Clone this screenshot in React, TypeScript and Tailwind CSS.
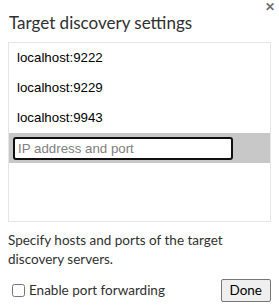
import { useState } from 'react';

const hosts = ['localhost:9222', 'localhost:9229', 'localhost:9943'];

export default function App() {
  const [value, setValue] = useState('');
  const [forwarding, setForwarding] = useState(false);

  return (
    <div className="relative w-[279px] h-[306px] bg-white text-[#202124] overflow-hidden" style={{ fontFamily: 'Lato, "Noto Sans", sans-serif' }}>
      <button className="absolute right-[4px] top-[1px] text-[#707070] text-[12px] leading-none font-bold">✕</button>

      <div className="px-2 pt-[12px]">
        <h1 className="text-[17px] leading-[22px] pl-[1px] text-[#303030]">Target discovery settings</h1>

        <div className="mt-[8px] h-[180px] border border-[#e6e6e6] flex flex-col" style={{ fontFamily: '"Liberation Sans", Arial, sans-serif' }}>
          {hosts.map((h) => (
            <div key={h} className="h-[30px] flex items-center pl-[8px] text-[13.3px] text-black">
              {h}
            </div>
          ))}
          <div className="h-[30px] bg-[#c8c8c8] flex items-center pl-[4px]">
            <input
              value={value}
              onChange={(e) => setValue(e.target.value)}
              placeholder="IP address and port"
              className="w-[220px] h-[23px] bg-white border-2 border-[#101010] rounded-[3px] px-[3px] text-[13.3px] text-black placeholder:text-[#808080] outline-none"
            />
          </div>
        </div>

        <p className="mt-[9px] text-[13.5px] leading-[19px] text-[#303030] pr-6">
          Specify hosts and ports of the target discovery servers.
        </p>

        <div className="mt-[10px] flex items-center justify-between">
          <label className="flex items-center gap-[4px] pl-[4px] text-[13.5px] text-[#303030]">
            <input
              type="checkbox"
              checked={forwarding}
              onChange={(e) => setForwarding(e.target.checked)}
              className="w-[13px] h-[13px] m-0"
            />
            Enable port forwarding
          </label>
          <button className="h-[23px] px-[8px] text-[13.5px] text-black bg-[#efefef] border border-[#767676] rounded-[2px]">
            Done
          </button>
        </div>
      </div>
    </div>
  );
}
